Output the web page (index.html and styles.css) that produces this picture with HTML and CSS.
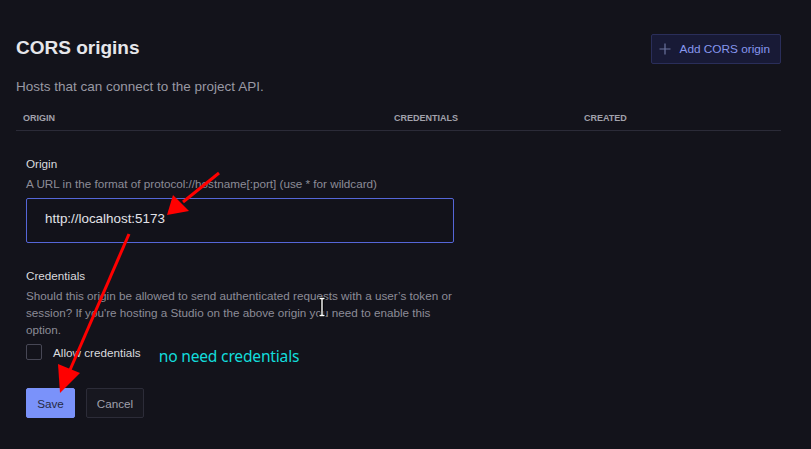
FILE: index.html
```html
<!DOCTYPE html>
<html>
<head>
<meta charset="utf-8">
<link rel="stylesheet" href="styles.css">
</head>
<body>
<div class="page">
  <div class="header">
    <h1 class="title">CORS origins</h1>
    <button class="add-btn">
      <svg class="plus" width="12" height="12" viewBox="0 0 12 12"><path d="M6 0.5V11.5M0.5 6H11.5" stroke="#6b739e" stroke-width="1.2" fill="none"/></svg>
      Add CORS origin
    </button>
  </div>
  <p class="subtitle">Hosts that can connect to the project API.</p>
  <div class="table-head">
    <div class="col col-origin">ORIGIN</div>
    <div class="col col-cred">CREDENTIALS</div>
    <div class="col col-created">CREATED</div>
  </div>
  <form class="form">
    <div class="field">
      <div class="label">Origin</div>
      <div class="help">A URL in the format of protocol://hostname[:port] (use * for wildcard)</div>
      <div class="input">http://localhost:5173</div>
    </div>
    <div class="field cred">
      <div class="label">Credentials</div>
      <div class="help multi">Should this origin be allowed to send authenticated requests with a user’s token or session? If you're hosting a Studio on the above origin you need to enable this option.</div>
      <div class="check-row">
        <span class="checkbox"></span>
        <span class="check-label">Allow credentials</span>
        <span class="note">no need credentials</span>
      </div>
    </div>
    <div class="actions">
      <button type="button" class="btn save">Save</button>
      <button type="button" class="btn cancel">Cancel</button>
    </div>
  </form>
</div>
<svg class="overlay" width="811" height="449" viewBox="0 0 811 449">
  <g fill="#f00" stroke="#f00">
    <line x1="219" y1="173" x2="183" y2="202" stroke-width="3"/>
    <polygon points="167,215 173,195 189,211" stroke="none"/>
    <line x1="129" y1="234" x2="70" y2="370" stroke-width="3"/>
    <polygon points="60,393 58,364 80,373" stroke="none"/>
  </g>
  <g transform="translate(322,307)">
    <path d="M-3.5 -8.5H3.5M-3.5 8.5H3.5M0 -8V8" stroke="#000" stroke-width="3.2" fill="none"/>
    <path d="M-2.5 -8.5H2.5M-2.5 8.5H2.5M0 -8V8" stroke="#fff" stroke-width="1.4" fill="none"/>
  </g>
</svg>
</body>
</html>
```
FILE: styles.css
```css
html, body {
  margin: 0;
  padding: 0;
  background: #13131b;
  width: 811px;
  height: 449px;
  overflow: hidden;
}
body {
  font-family: "Liberation Sans", Arial, sans-serif;
  position: relative;
}
.page {
  width: 765px;
  margin-left: 16px;
  padding-top: 34px;
}
.header {
  display: flex;
  justify-content: space-between;
  align-items: flex-start;
}
.title {
  margin: 0;
  padding-top: 2px;
  font-size: 19px;
  line-height: 24px;
  font-weight: 700;
  color: #e6e6ea;
}
.add-btn {
  display: flex;
  align-items: center;
  gap: 9px;
  height: 30px;
  box-sizing: border-box;
  padding: 0 10px 0 7px;
  background: #181a36;
  border: 1px solid #2a2e5a;
  border-radius: 2px;
  color: #8797ee;
  font-family: "Liberation Sans", Arial, sans-serif;
  font-size: 11.8px;
}
.plus { display: block; }
.subtitle {
  margin: 15px 0 0;
  font-size: 13.5px;
  line-height: 16px;
  color: #9999a4;
}
.table-head {
  display: flex;
  margin-top: 17px;
  height: 18px;
  border-bottom: 1px solid #2b2b38;
  font-size: 9px;
  font-weight: 700;
  color: #a2a2ac;
  line-height: 12px;
}
.col-origin { width: 371px; padding-left: 7px; }
.col-cred { width: 190px; }
.form {
  padding-left: 10px;
  padding-top: 26px;
}
.label {
  font-size: 11.7px;
  line-height: 14px;
  color: #dadade;
}
.help {
  margin-top: 6px;
  font-size: 11.7px;
  line-height: 14px;
  color: #8c8c97;
}
.help.multi {
  width: 432px;
  line-height: 17px;
  margin-top: 4px;
}
.input {
  margin-top: 7px;
  width: 428px;
  height: 45px;
  box-sizing: border-box;
  border: 1px solid #5566d8;
  border-radius: 2px;
  padding: 12px 0 0 18px;
  font-size: 13.4px;
  line-height: 16px;
  color: #e2e2e8;
  background: #12121a;
}
.cred { margin-top: 26px; }
.check-row {
  display: flex;
  align-items: center;
  margin-top: 5px;
  height: 17px;
}
.checkbox {
  width: 16px;
  height: 16px;
  box-sizing: border-box;
  border: 1px solid #474755;
  border-radius: 2px;
}
.check-label {
  margin-left: 11px;
  font-size: 11.7px;
  color: #dadade;
  padding-top: 1px;
}
.note {
  margin-left: 18px;
  margin-top: 9px;
  font-family: "Noto Sans", sans-serif;
  font-size: 15.6px;
  color: #12dcdc;
  letter-spacing: -0.2px;
}
.actions {
  display: flex;
  gap: 11px;
  margin-top: 28px;
}
.btn {
  height: 30px;
  box-sizing: border-box;
  border-radius: 2px;
  font-family: "Liberation Sans", Arial, sans-serif;
  font-size: 11.7px;
  padding: 0;
}
.save {
  width: 49px;
  background: #7a92fa;
  border: 1px solid #7a92fa;
  color: #262a44;
}
.cancel {
  width: 58px;
  background: #17171f;
  border: 1px solid #2c2c38;
  color: #a0a0ac;
}
.overlay {
  position: absolute;
  left: 0;
  top: 0;
  pointer-events: none;
}
```
